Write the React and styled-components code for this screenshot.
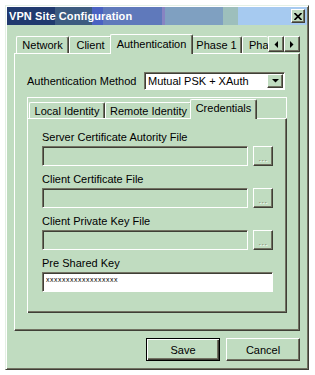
import React from 'react';
import styled, { createGlobalStyle, css } from 'styled-components';

const FACE = '#c0dcc0';
const LIGHT = '#ffffff';
const SHADOW = '#727262';
const DARK = '#3f3f36';

const Global = createGlobalStyle`
  html, body { margin: 0; padding: 0; background: #ffffff; }
  body {
    font-family: "Liberation Sans", Arial, sans-serif;
    font-size: 11px;
    color: #000;
  }
  * { box-sizing: border-box; }
`;

const raised = css`
  border: 1px solid;
  border-color: ${LIGHT} ${DARK} ${DARK} ${LIGHT};
  box-shadow: inset -1px -1px ${SHADOW};
`;

const sunken = css`
  border: 1px solid;
  border-color: ${SHADOW} ${LIGHT} ${LIGHT} ${SHADOW};
  box-shadow: inset 1px 1px ${DARK};
`;

const Window = styled.div`
  margin: 5px 0 0 5px;
  width: 304px;
  height: 365px;
  background: ${FACE};
  border: 1px solid;
  border-color: #e4f0e4 ${DARK} ${DARK} #e4f0e4;
  box-shadow: inset 1px 1px ${LIGHT}, inset -1px -1px ${SHADOW};
  padding: 1px;
  display: flex;
  flex-direction: column;
`;

const TitleBar = styled.div`
  height: 18px;
  flex: none;
  display: flex;
  align-items: center;
  padding: 0 2px 0 2px;
  background: linear-gradient(
    to right,
    #213a6f 0px, #213a6f 48px,
    #3d5b80 48px, #3d5b80 85px,
    #4a62c2 85px, #4a62c2 96px,
    #5f79bb 96px, #5f79bb 155px,
    #8784c2 155px, #8784c2 158px,
    #7fa0c1 158px, #7fa0c1 216px,
    #9dbfbc 216px, #9dbfbc 231px,
    #a6caf0 231px
  );
`;

const Title = styled.span`
  color: #fff;
  font-weight: bold;
  font-size: 11px;
  letter-spacing: 0.1px;
`;

const CloseButton = styled.div`
  margin-left: auto;
  width: 14px;
  height: 14px;
  background: ${FACE};
  ${raised};
  display: flex;
  align-items: center;
  justify-content: center;
`;

const Body = styled.div`
  flex: 1;
  display: flex;
  flex-direction: column;
  padding: 9px 7px 7px 7px;
`;

const TabStrip = styled.div`
  display: flex;
  align-items: flex-end;
  height: ${p => p.$h}px;
  flex: none;
  padding-left: ${p => p.$pl}px;
`;

const Tab = styled.div`
  flex: none;
  width: ${p => p.$w}px;
  height: ${p => (p.$active ? 20 : p.$h)}px;
  background: ${FACE};
  border-top: 1px solid ${LIGHT};
  border-left: 1px solid ${LIGHT};
  border-right: ${p => (p.$clip ? 'none' : `1px solid ${DARK}`)};
  box-shadow: ${p => (p.$clip ? 'none' : `inset -1px 0 ${SHADOW}`)};
  border-radius: 2px 2px 0 0;
  display: flex;
  align-items: center;
  justify-content: ${p => (p.$clip ? 'flex-start' : 'center')};
  padding-left: ${p => (p.$clip ? 6 : 0)}px;
  padding-bottom: ${p => (p.$active ? p.$lift : 0)}px;
  white-space: nowrap;
  ${p =>
    p.$active &&
    css`
      margin: 0 -2px -1px -2px;
      position: relative;
      z-index: 1;
    `}
`;

const ScrollButton = styled.div`
  flex: none;
  width: 16px;
  height: 16px;
  margin-bottom: 1px;
  background: ${FACE};
  ${raised};
  display: flex;
  align-items: center;
  justify-content: center;
`;

const OuterPanel = styled.div`
  flex: 1;
  background: ${FACE};
  border: 1px solid;
  border-color: ${LIGHT} ${DARK} ${DARK} ${LIGHT};
  box-shadow: inset -1px -1px ${SHADOW};
  padding: 18px 12px 0 12px;
  display: flex;
  flex-direction: column;
`;

const MethodRow = styled.div`
  display: flex;
  align-items: center;
  height: 18px;
  padding-right: 2px;
`;

const Label = styled.div`
  line-height: 13px;
  height: 13px;
  white-space: nowrap;
`;

const Select = styled.div`
  margin-left: auto;
  width: 141px;
  height: 18px;
  background: #fff;
  ${sunken};
  display: flex;
  align-items: center;
  padding: 1px 1px 1px 3px;
`;

const SelectText = styled.span`
  flex: 1;
  white-space: nowrap;
`;

const DropButton = styled.div`
  width: 16px;
  height: 14px;
  background: ${FACE};
  ${raised};
  display: flex;
  align-items: center;
  justify-content: center;
`;

const InnerControl = styled.div`
  margin-top: 7px;
  width: 260px;
  height: 216px;
  border-top: 1px solid ${LIGHT};
  border-left: 1px solid ${LIGHT};
  display: flex;
  flex-direction: column;
`;

const StripFiller = styled.div`
  flex: 1;
  align-self: stretch;
  border-right: 1px solid ${LIGHT};
`;

const InnerPanel = styled.div`
  flex: 1;
  border-top: 1px solid ${LIGHT};
  border-right: 1px solid ${DARK};
  border-bottom: 1px solid ${DARK};
  box-shadow: inset -1px -1px ${SHADOW};
  padding: 12px 0 0 14px;
  display: flex;
  flex-direction: column;
  gap: 7px;
`;

const Field = styled.div`
  display: flex;
  flex-direction: column;
  gap: 2px;
`;

const InputRow = styled.div`
  display: flex;
  gap: 5px;
`;

const Input = styled.div`
  width: ${p => p.$w}px;
  height: 20px;
  background: ${p => (p.$disabled ? FACE : '#fff')};
  ${sunken};
  display: flex;
  align-items: flex-start;
  padding: 3px 0 0 3px;
`;

const Password = styled.span`
  font-size: 7px;
  line-height: 7px;
  letter-spacing: 0.5px;
  color: #000;
`;

const BrowseButton = styled.div`
  width: 20px;
  height: 20px;
  background: ${FACE};
  ${raised};
  display: flex;
  align-items: center;
  justify-content: center;
  color: #8a8a78;
  text-shadow: 1px 1px #fff;
  font-size: 9px;
  letter-spacing: 0.5px;
  padding-top: 3px;
`;

const ButtonRow = styled.div`
  margin-top: 7px;
  display: flex;
  justify-content: flex-end;
  gap: 6px;
`;

const PushButton = styled.div`
  width: 74px;
  height: 23px;
  background: ${FACE};
  display: flex;
  align-items: center;
  justify-content: center;
  ${p =>
    p.$default
      ? css`
          border: 1px solid #000;
          box-shadow: inset 1px 1px ${LIGHT}, inset -1px -1px ${DARK}, inset -2px -2px ${SHADOW};
        `
      : css`
          border: 1px solid;
          border-color: ${LIGHT} ${DARK} ${DARK} ${LIGHT};
          box-shadow: inset -1px -1px ${SHADOW};
        `}
`;

const Arrow = ({ dir }) => {
  const pts = {
    left: '4,0 4,7 0.5,3.5',
    right: '0,0 0,7 3.5,3.5',
    down: '0,0 7,0 3.5,3.5',
  }[dir];
  const w = dir === 'down' ? 7 : 4;
  const h = dir === 'down' ? 4 : 7;
  return (
    <svg width={w} height={h} viewBox={`0 0 ${w} ${h}`}>
      <polygon points={pts} fill="#000" />
    </svg>
  );
};

const CloseGlyph = () => (
  <svg width="8" height="7" viewBox="0 0 8 7">
    <path d="M0.5 0 L7.5 7 M7.5 0 L0.5 7" stroke="#000" strokeWidth="1.7" />
  </svg>
);

const fields = [
  { label: 'Server Certificate Autority File' },
  { label: 'Client Certificate File' },
  { label: 'Client Private Key File' },
];

export default function App() {
  return (
    <>
      <Global />
      <Window>
        <TitleBar>
          <Title>VPN Site Configuration</Title>
          <CloseButton>
            <CloseGlyph />
          </CloseButton>
        </TitleBar>
        <Body>
          <TabStrip $h={19} $pl={2}>
            <Tab $w={53} $h={17}>Network</Tab>
            <Tab $w={43} $h={17}>Client</Tab>
            <Tab $w={83} $h={17} $active $lift={2}>Authentication</Tab>
            <Tab $w={51} $h={17}>Phase 1</Tab>
            <Tab $w={26} $h={17} $clip>Pha</Tab>
            <ScrollButton><Arrow dir="left" /></ScrollButton>
            <ScrollButton><Arrow dir="right" /></ScrollButton>
          </TabStrip>
          <OuterPanel>
            <MethodRow>
              <Label>Authentication Method</Label>
              <Select>
                <SelectText>Mutual PSK + XAuth</SelectText>
                <DropButton><Arrow dir="down" /></DropButton>
              </Select>
            </MethodRow>
            <InnerControl>
              <TabStrip $h={20} $pl={1}>
                <Tab $w={76} $h={16}>Local Identity</Tab>
                <Tab $w={87} $h={16}>Remote Identity</Tab>
                <Tab $w={67} $h={16} $active $lift={3}>Credentials</Tab>
                <StripFiller />
              </TabStrip>
              <InnerPanel>
                {fields.map(f => (
                  <Field key={f.label}>
                    <Label>{f.label}</Label>
                    <InputRow>
                      <Input $w={206} $disabled />
                      <BrowseButton>...</BrowseButton>
                    </InputRow>
                  </Field>
                ))}
                <Field>
                  <Label>Pre Shared Key</Label>
                  <Input $w={231}>
                    <Password>xxxxxxxxxxxxxxxxxx</Password>
                  </Input>
                </Field>
              </InnerPanel>
            </InnerControl>
          </OuterPanel>
          <ButtonRow>
            <PushButton $default>Save</PushButton>
            <PushButton>Cancel</PushButton>
          </ButtonRow>
        </Body>
      </Window>
    </>
  );
}
